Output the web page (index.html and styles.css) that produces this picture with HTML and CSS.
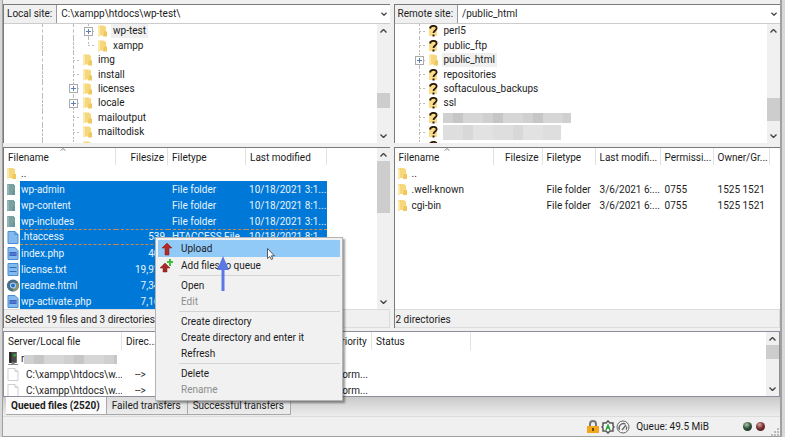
FILE: index.html
```html
<!DOCTYPE html>
<html lang="en">
  <head>
    <meta charset="utf-8" />
    <title>FileZilla</title>
    <link rel="stylesheet" href="styles.css" />
  </head>

  <body>
    <svg width="0" height="0" class="sprite">
      <symbol id="folder" viewBox="0 0 9 11">
        <path d="M0 0h6l1 1h1v9H2L0 11z" fill="#f7d77c" />
        <path d="M0 0l2 1v10l-2-1z" fill="#fbe9ae" />
        <path d="M6 6h3v5H5z" fill="#f0c75c" />
      </symbol>
      <symbol id="folder-selected" viewBox="0 0 9 11">
        <path d="M0 0h7v1h1v10H0z" fill="#7ba0a0" />
        <path d="M0 0l2 1v10l-2-1z" fill="#92b5bd" />
        <path d="M6 6h2v5H5z" fill="#6893a0" />
      </symbol>
      <symbol id="folder-unknown" viewBox="0 0 9 12">
        <path d="M0 1h8v10H0z" fill="#fbdc8a" />
        <path d="M1 3.5C1.5 0 8 0 7.600 3.500C7.500 5.500 4.500 5.500 4.500 8" fill="none" stroke="#2b1c0c" stroke-width="1.800" />
        <path d="M3.500 9.500h2v2h-2z" fill="#2b1c0c" />
      </symbol>
      <symbol id="file" viewBox="0 0 11 13">
        <path d="M.5.5h7l3 3v9H.5z" fill="#fff" stroke="#cfcfcf" />
        <path d="M7.500.5v3h3" fill="none" stroke="#cfcfcf" />
      </symbol>
      <symbol id="file-selected" viewBox="0 0 11 13">
        <path d="M.5.5h7l3 3v9H.5z" fill="#84b9ee" stroke="#4a8fd3" />
        <path d="M7.500.5v3h3" fill="none" stroke="#4a8fd3" />
      </symbol>
      <symbol id="file-php" viewBox="0 0 11 13">
        <path d="M.5.5h7l3 3v9H.5z" fill="#84b9ee" stroke="#4a8fd3" />
        <path d="M2 5h7v4H2z" fill="#3f63c4" />
        <path d="M3 7h1M5 7h1M7 7h1" stroke="#84b9ee" />
      </symbol>
      <symbol id="file-text" viewBox="0 0 11 13">
        <path d="M.5.500h10v12H.5z" fill="#84b9ee" stroke="#4a8fd3" />
        <path d="M2 4.500h7M2 8.500h7" stroke="#2f6fb5" />
      </symbol>
      <symbol id="browser" viewBox="0 0 12 12">
        <circle cx="6" cy="6" r="6" fill="#4b6c86" />
        <path d="M6 6L1 3A6 6 0 0 0 5 12z" fill="#46708a" />
        <path d="M6 6l5-3a6 6 0 0 1-5 9z" fill="#8b9470" />
        <circle cx="6" cy="6" r="3" fill="#b7d2ee" />
        <circle cx="6" cy="6" r="2" fill="#1f73d0" />
      </symbol>
      <symbol id="server" viewBox="0 0 9 12">
        <path d="M1 0h7v10H1z" fill="#4a4a4a" />
        <path d="M1 0h2v10H1z" fill="#222" />
        <path d="M5 2h2v2H5z" fill="#2fbf3a" />
        <path d="M3 10h3v1h3v1H0v-1h3z" fill="#888" />
      </symbol>
      <symbol id="up" viewBox="0 0 7 4">
        <path d="M.5 3.500l3-3 3 3" fill="none" stroke="#444" stroke-width="1.400" />
      </symbol>
      <symbol id="down" viewBox="0 0 7 4">
        <path d="M.5.5l3 3 3-3" fill="none" stroke="#444" stroke-width="1.400" />
      </symbol>
      <symbol id="sort" viewBox="0 0 6 3">
        <path d="M.5 2.500L3 .5l2.500 2" fill="none" stroke="#888" />
      </symbol>
    </svg>

    <main class="window">
      <div class="panes">
        <section class="site">
          <div class="site-bar">
            <label for="local-site">Local site:</label>
            <select id="local-site">
              <option>C:\xampp\htdocs\wp-test\</option>
            </select>
            <svg class="chevron"><use href="#down" /></svg>
          </div>
          <div class="tree-view">
            <ul class="tree local-tree">
              <li><i class="guide"></i><i class="guide short"></i><i class="branch"><button class="toggle" aria-label="Expand wp-test"></button></i><svg class="folder"><use href="#folder" /></svg><span class="current">wp-test</span></li>
              <li><i class="guide"></i><i class="guide short"></i><i class="branch last"></i><svg class="folder"><use href="#folder" /></svg><span>xampp</span></li>
              <li><i class="guide"></i><i class="branch"></i><svg class="folder"><use href="#folder" /></svg><span>img</span></li>
              <li><i class="guide"></i><i class="branch"></i><svg class="folder"><use href="#folder" /></svg><span>install</span></li>
              <li><i class="guide"></i><i class="branch"><button class="toggle" aria-label="Expand licenses"></button></i><svg class="folder"><use href="#folder" /></svg><span>licenses</span></li>
              <li><i class="guide"></i><i class="branch"><button class="toggle" aria-label="Expand locale"></button></i><svg class="folder"><use href="#folder" /></svg><span>locale</span></li>
              <li><i class="guide"></i><i class="branch"></i><svg class="folder"><use href="#folder" /></svg><span>mailoutput</span></li>
              <li><i class="guide"></i><i class="branch"></i><svg class="folder"><use href="#folder" /></svg><span>mailtodisk</span></li>
              <li><i class="guide"></i><i class="branch"></i><svg class="folder"><use href="#folder" /></svg></li>
            </ul>
            <div class="scrollbar">
              <svg><use href="#up" /></svg>
              <i class="thumb thumb-local-tree"></i>
              <svg><use href="#down" /></svg>
            </div>
          </div>
        </section>

        <section class="site">
          <div class="site-bar">
            <label for="remote-site">Remote site:</label>
            <select id="remote-site">
              <option>/public_html</option>
            </select>
            <svg class="chevron"><use href="#down" /></svg>
          </div>
          <div class="tree-view">
            <ul class="tree remote-tree">
              <li><i class="branch"></i><svg class="folder"><use href="#folder-unknown" /></svg><span>perl5</span></li>
              <li><i class="branch"></i><svg class="folder"><use href="#folder-unknown" /></svg><span>public_ftp</span></li>
              <li><i class="branch"><button class="toggle" aria-label="Expand public_html"></button></i><svg class="folder"><use href="#folder" /></svg><span class="current">public_html</span></li>
              <li><i class="branch"></i><svg class="folder"><use href="#folder-unknown" /></svg><span>repositories</span></li>
              <li><i class="branch"></i><svg class="folder"><use href="#folder-unknown" /></svg><span>softaculous_backups</span></li>
              <li><i class="branch"></i><svg class="folder"><use href="#folder-unknown" /></svg><span>ssl</span></li>
              <li><i class="branch"></i><svg class="folder"><use href="#folder-unknown" /></svg><b class="redacted redacted-long"></b></li>
              <li><i class="branch"></i><svg class="folder"><use href="#folder-unknown" /></svg><b class="redacted redacted-pale"></b></li>
              <li><i class="branch"></i><svg class="folder"><use href="#folder-unknown" /></svg></li>
            </ul>
            <div class="scrollbar">
              <svg><use href="#up" /></svg>
              <i class="thumb thumb-remote-tree"></i>
              <svg><use href="#down" /></svg>
            </div>
          </div>
        </section>

        <section class="files">
          <div class="list-view">
            <div class="list">
              <table class="local-files">
                <colgroup>
                  <col class="c-icon" /><col class="c-name" /><col class="c-size" /><col class="c-type" /><col class="c-date" /><col />
                </colgroup>
                <thead>
                  <tr>
                    <th colspan="2">Filename<svg class="sort"><use href="#sort" /></svg></th>
                    <th class="num">Filesize</th>
                    <th>Filetype</th>
                    <th>Last modified</th>
                    <td></td>
                  </tr>
                </thead>
                <tbody>
                  <tr><td><svg class="folder"><use href="#folder" /></svg></td><td>..</td><td></td><td></td><td></td></tr>
                  <tr class="selected"><td><svg class="folder"><use href="#folder-selected" /></svg></td><td>wp-admin</td><td></td><td>File folder</td><td class="date">10/18/2021 3:1...</td></tr>
                  <tr class="selected"><td><svg class="folder"><use href="#folder-selected" /></svg></td><td>wp-content</td><td></td><td>File folder</td><td class="date">10/18/2021 8:1...</td></tr>
                  <tr class="selected"><td><svg class="folder"><use href="#folder-selected" /></svg></td><td>wp-includes</td><td></td><td>File folder</td><td class="date">10/18/2021 3:1...</td></tr>
                  <tr class="selected focused"><td><svg class="file"><use href="#file-selected" /></svg></td><td>.htaccess</td><td class="num">539</td><td>HTACCESS File</td><td class="date">10/18/2021 8:1...</td></tr>
                  <tr class="selected"><td><svg class="file"><use href="#file-php" /></svg></td><td>index.php</td><td class="num">405</td><td></td><td></td></tr>
                  <tr class="selected"><td><svg class="file"><use href="#file-text" /></svg></td><td>license.txt</td><td class="num">19,915</td><td></td><td></td></tr>
                  <tr class="selected"><td><svg class="file"><use href="#browser" /></svg></td><td>readme.html</td><td class="num">7,346</td><td></td><td></td></tr>
                  <tr class="selected"><td><svg class="file"><use href="#file-php" /></svg></td><td>wp-activate.php</td><td class="num">7,165</td><td></td><td></td></tr>
                </tbody>
              </table>
            </div>
            <div class="scrollbar">
              <svg><use href="#up" /></svg>
              <i class="thumb thumb-local-files"></i>
              <svg><use href="#down" /></svg>
            </div>
          </div>
          <p class="summary">Selected 19 files and 3 directories.</p>
        </section>

        <section class="files">
          <div class="list-view">
            <div class="list">
              <table class="remote-files">
                <colgroup>
                  <col class="c-icon" /><col class="c-name" /><col class="c-size" /><col class="c-type" /><col class="c-date" /><col class="c-perm" /><col class="c-owner" /><col />
                </colgroup>
                <thead>
                  <tr>
                    <th colspan="2">Filename<svg class="sort"><use href="#sort" /></svg></th>
                    <th class="num">Filesize</th>
                    <th>Filetype</th>
                    <th>Last modifi...</th>
                    <th>Permissi...</th>
                    <th>Owner/Gr...</th>
                    <td></td>
                  </tr>
                </thead>
                <tbody>
                  <tr><td><svg class="folder"><use href="#folder" /></svg></td><td>..</td><td></td><td></td><td></td><td></td><td></td></tr>
                  <tr><td><svg class="folder"><use href="#folder" /></svg></td><td>.well-known</td><td></td><td>File folder</td><td>3/6/2021 6:...</td><td>0755</td><td>1525 1521</td></tr>
                  <tr><td><svg class="folder"><use href="#folder" /></svg></td><td>cgi-bin</td><td></td><td>File folder</td><td>3/6/2021 6:...</td><td>0755</td><td>1525 1521</td></tr>
                </tbody>
              </table>
            </div>
          </div>
          <p class="summary">2 directories</p>
        </section>
      </div>

      <section class="queue">
        <div class="list">
          <table class="queue-table">
            <colgroup>
              <col class="c-icon" /><col class="c-server" /><col class="c-direction" /><col class="c-remote" /><col class="c-priority" /><col class="c-status" /><col />
            </colgroup>
            <thead>
              <tr>
                <th colspan="2">Server/Local file</th>
                <th>Direc...</th>
                <th></th>
                <th>Priority</th>
                <th>Status</th>
                <td></td>
              </tr>
            </thead>
            <tbody>
              <tr><td><svg class="file"><use href="#server" /></svg></td><td class="server">r<b class="redacted"></b></td><td></td><td></td><td></td><td></td></tr>
              <tr><td><svg class="file"><use href="#file" /></svg></td><td class="path">C:\xampp\htdocs\w...</td><td class="direction">--&gt;</td><td></td><td>Norm...</td><td></td></tr>
              <tr><td><svg class="file"><use href="#file" /></svg></td><td class="path">C:\xampp\htdocs\w...</td><td class="direction">--&gt;</td><td></td><td>Norm...</td><td></td></tr>
            </tbody>
          </table>
        </div>
        <div class="scrollbar">
          <svg><use href="#up" /></svg>
          <i class="thumb thumb-queue"></i>
          <svg><use href="#down" /></svg>
        </div>
      </section>

      <nav class="tabs">
        <button class="tab active">Queued files (2520)</button>
        <button class="tab">Failed transfers</button>
        <button class="tab">Successful transfers</button>
      </nav>

      <footer class="status-bar">
        <svg width="14" height="14" viewBox="0 0 14 14">
          <path d="M4 7V4a3 3 0 0 1 6 0v3" fill="none" stroke="#777" stroke-width="2" />
          <path d="M1 6h12v7H1z" fill="#f3a81c" />
          <path d="M6 8h2v3H6z" fill="#6b4a10" />
        </svg>
        <svg width="14" height="14" viewBox="0 0 14 14">
          <path d="M7 1l2 2h3v3l1 1-1 1v3H9l-2 2-2-2H2V8L1 7l1-1V3h3z" fill="#fff" stroke="#555" stroke-width="1.500" />
          <path d="M5 10l2-5 2 5M6 8h2" fill="none" stroke="#22a83a" stroke-width="1.500" />
        </svg>
        <svg width="14" height="14" viewBox="0 0 14 14">
          <circle cx="7" cy="7" r="6" fill="#f4f4f4" stroke="#666" />
          <path d="M3.500 10a4.500 4.500 0 0 1 6-6M10.500 6.500a4 4 0 0 1-.5 3.500M6 10l4-5" fill="none" stroke="#666" stroke-width="1.300" />
        </svg>
        <span class="queue-size">Queue: 49.5 MiB</span>
        <i class="led led-green"></i>
        <i class="led led-red"></i>
        <svg class="grip" width="8" height="8" viewBox="0 0 8 8">
          <path d="M6 0h2v2H6zM3 3h2v2H3zM6 3h2v2H6zM0 6h2v2H0zM3 6h2v2H3zM6 6h2v2H6z" fill="#bbb" />
        </svg>
      </footer>
    </main>

    <div class="menu" role="menu">
      <button class="with-icon hover" role="menuitem">
        <svg width="14" height="14" viewBox="0 0 14 14">
          <path d="M7 1l5 5H9v7H5V6H2z" fill="#b52a26" stroke="#7c1e1c" stroke-width=".5" />
        </svg>
        Upload
      </button>
      <button class="with-icon" role="menuitem">
        <svg width="14" height="14" viewBox="0 0 14 14">
          <path d="M5 4l5 5H7v4H3V9H0z" fill="#a82a26" stroke="#7c1e1c" stroke-width=".5" />
          <path d="M9 0h2v2h2v2h-2v3H9V4H7V2h2z" fill="#3fbf3c" />
        </svg>
        Add files to queue
      </button>
      <hr />
      <button role="menuitem">Open</button>
      <button role="menuitem" disabled>Edit</button>
      <hr />
      <button role="menuitem">Create directory</button>
      <button role="menuitem">Create directory and enter it</button>
      <button role="menuitem">Refresh</button>
      <hr />
      <button role="menuitem">Delete</button>
      <button role="menuitem" disabled>Rename</button>
    </div>

    <svg class="pointer-arrow" viewBox="0 0 12 35">
      <path d="M6 0l6 14H7.500v21h-3V14H0z" fill="#5b78e3" />
    </svg>
    <svg class="cursor" viewBox="0 0 8 12">
      <path d="M.5.5v10l2.300-2 1.500 3 1.500-.7-1.400-3h3z" fill="#fff" stroke="#333" stroke-width=".8" />
    </svg>
  </body>
</html>
```
FILE: styles.css
```css
:root {
  --face: #f0f0f0;
  --dark: #7a7a7a;
  --line: #dcdcdc;
  --select: #0078d7;
}

* {
  box-sizing: border-box;
}

body {
  margin: 0;
  height: 100vh;
  padding: 0 3px 5px 2px;
  background: linear-gradient(to top, #fff 5px, #d8d8d8 5px);
  color: #1c1c1c;
  font-family: Roboto, sans-serif;
  font-size: 10px;
  line-height: 14px;
  overflow: hidden;
}

button,
select {
  font: inherit;
  color: inherit;
  border: 0;
  margin: 0;
  padding: 0;
  background: none;
}

.sprite {
  position: absolute;
}

.window {
  height: 100%;
  display: flex;
  flex-direction: column;
  padding-top: 4px;
  background: var(--face);
  border: solid #a0a0a0;
  border-width: 0 2px 1px 1px;
}

.panes {
  flex: 1;
  min-height: 0;
  display: grid;
  grid-template-columns: 1fr 1fr;
  grid-template-rows: 139px 1fr;
  gap: 4px;
  margin-bottom: 3px;
}

.site,
.files {
  display: flex;
  flex-direction: column;
  min-width: 0;
  min-height: 0;
  background: #fff;
  border-top: 1px solid var(--dark);
  border-left: 1px solid var(--dark);
}

/* site bar */
.site-bar {
  display: flex;
  align-items: center;
  height: 19px;
  border-bottom: 1px solid #ccc;
}

.site-bar label {
  align-self: stretch;
  padding: 2px 4px 2px 3px;
  background: var(--face);
  border-right: 1px solid #999;
}

.site-bar select {
  flex: 1;
  padding-left: 4px;
  appearance: none;
}

.chevron {
  width: 6px;
  height: 4px;
  margin-right: 3px;
}

/* directory trees */
.tree-view,
.list-view {
  flex: 1;
  min-height: 0;
  display: flex;
}

.tree {
  flex: 1;
  height: 130px;
  margin: 0;
  list-style: none;
  display: flex;
  flex-direction: column;
}

.tree-view {
  overflow: hidden;
}

.local-tree {
  padding: 0 0 0 38px;
}

.remote-tree {
  padding: 0 0 0 24px;
}

.tree li {
  flex: 1;
  min-height: 0;
  display: flex;
  align-items: center;
}

.guide {
  align-self: stretch;
  width: 31px;
  border-left: 1px dashed #bbb;
}

.guide.short {
  width: 15px;
}

.branch {
  align-self: stretch;
  width: 10px;
  display: flex;
  align-items: center;
  background:
    repeating-linear-gradient(#bbb 0 2px, transparent 2px 4px) 0 0 / 1px 100% no-repeat,
    repeating-linear-gradient(to right, #bbb 0 2px, transparent 2px 4px) 0 50% / 8px 1px no-repeat;
}

.branch.last {
  background-size: 1px 50%, 8px 1px;
}

.toggle {
  width: 9px;
  height: 9px;
  margin-left: -4px;
  flex: none;
  border: 1px solid #aaa;
  background:
    linear-gradient(#5b82b5, #5b82b5) center / 5px 1px no-repeat,
    linear-gradient(#5b82b5, #5b82b5) center / 1px 5px no-repeat,
    #fff;
}

.folder {
  display: block;
  width: 9px;
  height: 11px;
}

.tree .folder {
  height: 12px;
}

.tree span {
  margin-left: 4px;
  padding: 0 2px;
}

.tree .current {
  background: var(--face);
}

.redacted {
  width: 93px;
  height: 9px;
  background: repeating-linear-gradient(to right, #d0d0d0 0 10px, #c6c6c6 10px 20px, #d6d6d6 20px 40px);
}

.redacted-long {
  width: 128px;
  height: 10px;
  margin-left: 5px;
}

.redacted-pale {
  align-self: stretch;
  width: 118px;
  height: auto;
  margin-left: 5px;
  background: repeating-linear-gradient(to right, #dedede 0 20px, #d8d8d8 20px 30px, #e2e2e2 30px 50px);
}

/* scrollbars */
.scrollbar {
  display: flex;
  flex-direction: column;
  justify-content: space-between;
  align-items: center;
  width: 13px;
  padding: 5px 0;
  background: var(--face);
}

.scrollbar svg {
  width: 7px;
  height: 4px;
}

.thumb {
  width: 13px;
  background: #cdcdcd;
}

.thumb-local-tree {
  height: 15px;
  margin: auto 0 26px;
}

.thumb-remote-tree {
  height: 23px;
  margin: auto 0 13px;
}

.thumb-local-files {
  height: 52px;
  margin: 4px 0 auto;
}

.thumb-queue {
  height: 14px;
  margin: 4px 0 auto;
}

/* file lists */
.list {
  flex: 1;
  min-width: 0;
  overflow: hidden;
}

table {
  width: 100%;
  table-layout: fixed;
  border-spacing: 0;
}

th {
  position: relative;
  height: 17px;
  padding: 2px 4px 0;
  font-weight: normal;
  text-align: left;
  border-right: 1px solid #e2e2e2;
}

tbody td {
  height: 16px;
  padding: 2px 4px 0;
}

th,
td {
  white-space: nowrap;
  overflow: hidden;
}

.num {
  text-align: right;
  padding-right: 3px;
}

tbody .date {
  padding-left: 3px;
  padding-right: 0;
}

tbody td:first-child {
  padding: 0 0 0 3px;
}

tbody td:nth-child(2) {
  padding: 2px 0 0 1px;
}

.sort {
  position: absolute;
  top: 0;
  left: 50%;
  width: 6px;
  height: 3px;
}

.file {
  display: block;
  width: 12px;
  height: 13px;
}

.selected td:not(:first-child) {
  color: #e8f3fc;
  background: var(--select);
}

.focused td:not(:first-child) {
  padding-top: 0;
  border: dashed #c98a50;
  border-width: 1px 0;
}

.c-icon {
  width: 16px;
}

.local-files .c-name {
  width: 96px;
}

.local-files .c-size {
  width: 52px;
}

.local-files .c-type {
  width: 78px;
}

.local-files .c-date {
  width: 81px;
}

.remote-files .c-name {
  width: 83px;
}

.remote-files .c-size {
  width: 49px;
}

.remote-files .c-type,
.remote-files .c-perm {
  width: 53px;
}

.remote-files .c-date {
  width: 65px;
}

.remote-files .c-owner {
  width: 56px;
}

.summary {
  height: 19px;
  margin: 0;
  padding: 3px 1px 0;
  background: var(--face);
  border: solid var(--line);
  border-width: 1px 1px 1px 0;
}

/* transfer queue */
.queue {
  display: flex;
  height: 66px;
  background: #fff;
  border: 1px solid #8a8f99;
}

.c-server {
  width: 102px;
}

.c-direction {
  width: 38px;
}

.c-remote {
  width: 171px;
}

.c-priority {
  width: 41px;
}

.c-status {
  width: 99px;
}

.queue-table th {
  height: 18px;
}

tbody .server:nth-child(2) {
  display: flex;
  align-items: center;
}

tbody .path:nth-child(2) {
  padding-left: 6px;
}

tbody .direction {
  padding-left: 13px;
}

.tabs {
  display: flex;
  height: 20px;
  align-items: flex-start;
  background: linear-gradient(#c9c9c9, #ededed);
  border-bottom: 1px solid var(--line);
}

.tab {
  height: 18px;
  padding: 1px 6px 0 5px;
  background: linear-gradient(#dcdcdc, #ececec);
  border: solid #a8a8a8;
  border-width: 0 1px 1px 0;
}

.tab.active {
  margin-left: 3px;
  font-weight: bold;
  background: #fafafa;
}

.status-bar {
  display: flex;
  align-items: center;
  justify-content: flex-end;
  gap: 1px;
  height: 19px;
  padding-right: 1px;
}

.queue-size {
  margin: 0 32px 0 5px;
}

.led {
  width: 9px;
  height: 9px;
  margin: 0 2px 0 1px;
  border-radius: 50%;
}

.led-green {
  background: radial-gradient(circle at 40% 30%, #a8c8a8, #2d4a35 50%, #1d2a20);
}

.led-red {
  background: radial-gradient(circle at 40% 30%, #d8a0a0, #73292b 50%, #3a1718);
}

.grip {
  align-self: flex-end;
  margin-left: 3px;
}

/* context menu */
.menu {
  position: absolute;
  top: 237px;
  left: 155px;
  width: 188px;
  padding: 2px;
  display: flex;
  flex-direction: column;
  background: #f1f1f1;
  border: 1px solid #b4b4b4;
  box-shadow: 2px 2px 2px rgba(0, 0, 0, 0.4);
}

.menu button {
  height: 16px;
  padding-left: 23px;
  display: flex;
  align-items: center;
  text-align: left;
}

.menu .with-icon {
  height: 17px;
  padding-left: 2px;
  gap: 7px;
}

.menu button:disabled {
  color: #8d8d8d;
}

.menu .hover {
  background: #91c9f7;
}

.menu hr {
  width: 161px;
  height: 1px;
  margin: 1px 0 2px auto;
  border: 0;
  background: #d4d4d4;
}

.pointer-arrow {
  position: absolute;
  top: 256px;
  left: 217px;
  width: 12px;
  height: 35px;
}

.cursor {
  position: absolute;
  top: 248px;
  left: 267px;
  width: 8px;
  height: 12px;
}
```
